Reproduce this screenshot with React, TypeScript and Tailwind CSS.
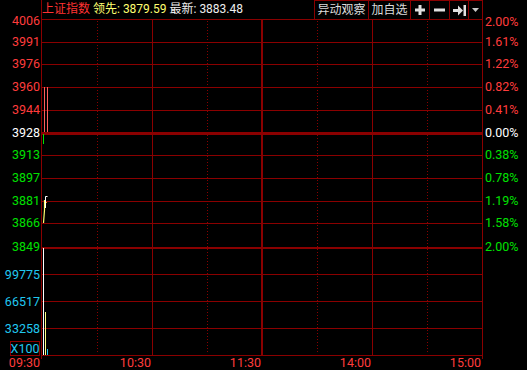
import React from "react";

const GRID = "#8a0000";

function Header() {
  const btn =
    "h-[19px] border-l border-t border-[#8a0000] flex items-center justify-center text-[#dcdcdc] text-[12px] leading-[18px]";
  return (
    <div className="h-[20px] border-l border-b border-[#8a0000] flex justify-between">
      <div className="flex items-center text-[12px] leading-[19px] whitespace-pre">
        <span className="text-[#ff3232]">上证指数</span>
        <span className="text-[#ffff70]"> 领先: 3879.59</span>
        <span className="text-[#eeeeee]"> 最新: 3883.48</span>
      </div>
      <div className="flex">
        <div className={btn + " w-[54px]"}>异动观察</div>
        <div className={btn + " w-[42px]"}>加自选</div>
        <div className={btn + " w-[19px]"}>
          <svg width="10" height="10" viewBox="0 0 10 10">
            <rect x="0" y="3.5" width="10" height="3" fill="#e0e0e0" />
            <rect x="3.5" y="0" width="3" height="10" fill="#e0e0e0" />
          </svg>
        </div>
        <div className={btn + " w-[20px]"}>
          <svg width="11" height="10" viewBox="0 0 11 10">
            <rect x="0" y="3.5" width="11" height="3" fill="#e0e0e0" />
          </svg>
        </div>
        <div className={btn + " w-[19px]"}>
          <svg width="13" height="11" viewBox="0 0 13 11">
            <rect x="0" y="4" width="6" height="3" fill="#e0e0e0" />
            <polygon points="5,0.5 10,5.5 5,10.5" fill="#e0e0e0" />
            <rect x="10.5" y="0" width="2.5" height="11" fill="#e0e0e0" />
          </svg>
        </div>
        <div className={btn + " w-[15px] border-r"}>
          <svg width="7" height="4" viewBox="0 0 7 4">
            <polygon points="0,0 7,0 3.5,4" fill="#c8c8c8" />
          </svg>
        </div>
      </div>
    </div>
  );
}

function ChartSvg() {
  const thin = [22, 44, 67, 90, 135, 158, 181, 203, 254, 281, 308, 335];
  const dotted = [56.5, 166.5, 276.5, 386.5];
  return (
    <svg width={442} height={336} className="block overflow-visible">
      {thin.map((y) => (
        <rect key={y} x={0} y={y} width={442} height={1} fill={GRID} />
      ))}
      <rect x={0} y={112} width={442} height={3} fill={GRID} />
      <rect x={0} y={227} width={442} height={2} fill={GRID} />
      {dotted.map((x) => (
        <line
          key={x}
          x1={x}
          x2={x}
          y1={1}
          y2={334}
          stroke="#8a0000"
          strokeWidth={1}
          strokeDasharray="1 2"
        />
      ))}
      <rect x={111} y={0} width={1} height={336} fill={GRID} />
      <rect x={220} y={0} width={2} height={336} fill={GRID} />
      <rect x={331} y={0} width={1} height={336} fill={GRID} />
      <rect x={0} y={0} width={1} height={339} fill={GRID} />
      <rect x={441} y={0} width={1} height={339} fill={GRID} />

      {/* price data */}
      <rect x={3} y={67} width={1} height={45} fill="#ff5c5c" />
      <rect x={6} y={67} width={1} height={45} fill="#ff5c5c" />
      <rect x={2} y={114} width={1} height={10} fill="#00e000" />
      <polyline
        points="3.5,180 3.5,190 2.5,203"
        fill="none"
        stroke="#ffff70"
        strokeWidth={1.2}
      />
      <polyline
        points="4.5,188 4.5,176.5 6.5,176.5"
        fill="none"
        stroke="#ffffff"
        strokeWidth={1}
      />
      <rect x={5} y={182} width={1} height={1} fill="#ff9900" />

      {/* volume data */}
      <rect x={2} y={228} width={1} height={107} fill="#ffffff" />
      <rect x={4} y={292} width={1} height={43} fill="#ffff80" />
      <rect x={6} y={329} width={1} height={6} fill="#20c8f0" />
    </svg>
  );
}

function LeftAxis() {
  return (
    <div className="w-[41px] flex flex-col items-end pr-[1px] text-[12.5px] leading-[14px]">
      <div className="mt-[14px] h-[14px] text-[#ff3c3c]">4006</div>
      <div className="mt-[7px] h-[14px] text-[#ff3c3c]">3991</div>
      <div className="mt-[8px] h-[14px] text-[#ff3c3c]">3976</div>
      <div className="mt-[9px] h-[14px] text-[#ff3c3c]">3960</div>
      <div className="mt-[9px] h-[14px] text-[#ff3c3c]">3944</div>
      <div className="mt-[9px] h-[14px] text-white">3928</div>
      <div className="mt-[8px] h-[14px] text-[#00e000]">3913</div>
      <div className="mt-[9px] h-[14px] text-[#00e000]">3897</div>
      <div className="mt-[9px] h-[14px] text-[#00e000]">3881</div>
      <div className="mt-[8px] h-[14px] text-[#00e000]">3866</div>
      <div className="mt-[10px] h-[14px] text-[#00e000]">3849</div>
      <div className="mt-[14px] h-[14px] text-[#20c8f0]">99775</div>
      <div className="mt-[13px] h-[14px] text-[#20c8f0]">66517</div>
      <div className="mt-[13px] h-[14px] text-[#20c8f0]">33258</div>
      <div className="mt-[5px] h-[15px] w-[30px] border border-[#8a0000] flex items-center justify-center text-[#20c8f0] leading-[13px]">
        X100
      </div>
    </div>
  );
}

function RightAxis() {
  return (
    <div className="w-[44px] flex flex-col pl-[2px] text-[12.5px] leading-[14px]">
      <div className="mt-[15px] h-[14px] text-[#ff3c3c]">2.00%</div>
      <div className="mt-[6px] h-[14px] text-[#ff3c3c]">1.61%</div>
      <div className="mt-[8px] h-[14px] text-[#ff3c3c]">1.22%</div>
      <div className="mt-[9px] h-[14px] text-[#ff3c3c]">0.82%</div>
      <div className="mt-[9px] h-[14px] text-[#ff3c3c]">0.41%</div>
      <div className="mt-[9px] h-[14px] text-white">0.00%</div>
      <div className="mt-[8px] h-[14px] text-[#00e000]">0.38%</div>
      <div className="mt-[9px] h-[14px] text-[#00e000]">0.78%</div>
      <div className="mt-[9px] h-[14px] text-[#00e000]">1.19%</div>
      <div className="mt-[8px] h-[14px] text-[#00e000]">1.58%</div>
      <div className="mt-[10px] h-[14px] text-[#00e000]">2.00%</div>
    </div>
  );
}

function TimeRow() {
  const cell = "w-[110px] text-right pr-[1px]";
  return (
    <div className="flex h-[14px] text-[12.5px] leading-[14px] text-[#ff3c3c]">
      <div className="w-[41px] text-right pr-[1px]">09:30</div>
      <div className="w-[442px] flex pl-[1px]">
        <div className={cell}>10:30</div>
        <div className={cell}>11:30</div>
        <div className={cell}>14:00</div>
        <div className={cell}>15:00</div>
      </div>
    </div>
  );
}

export default function App() {
  return (
    <div className="w-[527px] h-[370px] bg-black overflow-hidden font-['Roboto','Noto_Sans_CJK_SC',sans-serif]">
      <div className="flex h-[356px]">
        <LeftAxis />
        <div className="w-[442px] flex flex-col">
          <Header />
          <ChartSvg />
        </div>
        <RightAxis />
      </div>
      <TimeRow />
    </div>
  );
}
